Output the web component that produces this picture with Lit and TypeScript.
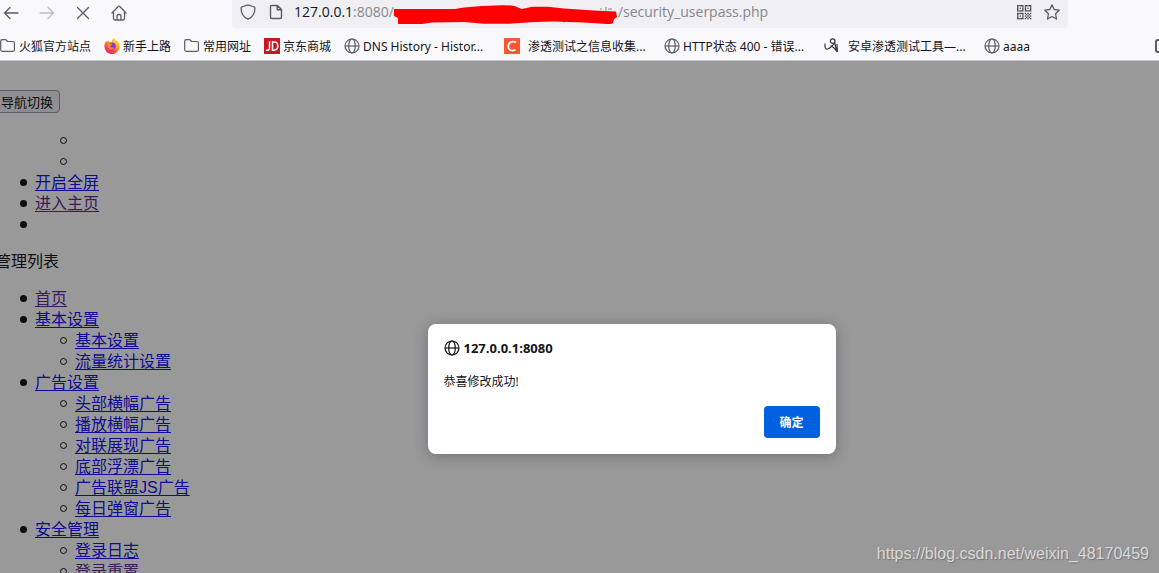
import { LitElement, html, css, svg, nothing } from "lit";
import { customElement } from "lit/decorators.js";

const globe = html`<svg class="icon" viewBox="0 0 16 16" fill="none" stroke="currentColor" stroke-width="1.2" aria-hidden="true">
  <circle cx="8" cy="8" r="7"></circle><ellipse cx="8" cy="8" rx="3.3" ry="7"></ellipse><path d="M1 8H15"></path></svg>`;

const folder = html`<svg class="icon" viewBox="0 0 16 16" fill="none" stroke="currentColor" stroke-width="1.2" stroke-linejoin="round" aria-hidden="true">
  <path d="M.7 3.2q0-1.5 1.5-1.5h3.3q.7 0 1.2.6l1 1.2h5.200q1.500 0 1.500 1.500v6.800q0 1.500-1.500 1.500H2.200q-1.500 0-1.500-1.500z"></path></svg>`;

const firefox = html`<svg class="icon" viewBox="0 0 16 16" aria-hidden="true">
  <defs><linearGradient id="flame" x1=".85" y1=".1" x2=".25" y2="1">
    <stop offset="0" stop-color="#ffe23a"></stop><stop offset=".4" stop-color="#ff9a1f"></stop>
    <stop offset=".72" stop-color="#ff3f4a"></stop><stop offset="1" stop-color="#e5157f"></stop></linearGradient></defs>
  <path fill="url(#flame)" d="M10.200 0c.3 1.500 1.500 2.300 2.400 3.200.9-.2.900-.5.900-.5 1.300 1.500 2.200 3.500 2.100 5.700A7.600 7.600 0 0 1 .4 8.600C.3 6.300 1.200 4.200 2.500 2.800c0 .5.100.9.300 1.200.500-.8 1.200-1.300 1.900-1.500-.1.700.1 1.200.4 1.500 1.300-.2 2 .1 2.700.7C7.600 2.700 8.500 1 10.200 0z"></path>
  <circle cx="8" cy="8.300" r="3.700" fill="#8434d8"></circle>
  <path fill="#ff8b20" d="M3.200 5.300c1.300-.6 2.500-.4 3.600.4l1.700.5c-.1.900-.8 1-1.700 1.200-.7.700-.5 1.700.5 2.200 1 .4 1.700-.2 2.600 0 .7.200.5.800 0 1.200-2.200 1.500-5.200.7-6.200-1.400z"></path></svg>`;

const jd = html`<svg class="icon" viewBox="0 0 16 16" fill="none" stroke="#fff" stroke-width="1.500" aria-hidden="true">
  <path fill="#c81623" stroke="none" d="M0 0h16v16H0z"></path>
  <path d="M5.500 3.300v7q0 2-2 2H2M8.500 12.300V4h2q3.300 0 3.300 4t-4 4.200z"></path></svg>`;

const csdn = html`<svg class="icon" viewBox="0 0 16 16" fill="none" aria-hidden="true">
  <path fill="#fc5531" d="M0 0h16v16H0z"></path>
  <path stroke="#fff" stroke-width="1.800" d="M12 4.600C9.500 3 4.800 3.300 4.300 8.200c-.3 4.500 4 5.100 7.300 3.500"></path></svg>`;

const sketch = html`<svg class="icon" viewBox="0 0 16 16" fill="none" stroke="#333" stroke-width="1.200" aria-hidden="true">
  <path d="M1 5.500c-.2 4 .2 5.700 2 5.700 2.500-.2 4.500-2.500 7-5.200M11 3.200a2.300 2.300 0 1 1-4.600-.2 2.300 2.300 0 0 1 4.600.2zM10.800 4c.2 3 .8 6 2.400 9.300M6.500 7.800c2.500.5 4.600 2.800 6.700 6M13 6l.4 8"></path></svg>`;

type Bookmark = { icon: unknown; title: string; wide?: boolean };
const bookmarks: Bookmark[] = [
  { icon: folder, title: "火狐官方站点" },
  { icon: firefox, title: "新手上路" },
  { icon: folder, title: "常用网址" },
  { icon: jd, title: "京东商城" },
  { icon: globe, title: "DNS History - Histor..." },
  { icon: csdn, title: "渗透测试之信息收集...", wide: true },
  { icon: globe, title: "HTTP状态 400 - 错误..." },
  { icon: sketch, title: "安卓渗透测试工具—...", wide: true },
  { icon: globe, title: "aaaa" },
];

type Entry = { label: string; visited?: boolean; children?: Entry[] };
const menu: Entry[] = [
  { label: "首页", visited: true },
  { label: "基本设置", children: [{ label: "基本设置" }, { label: "流量统计设置" }] },
  {
    label: "广告设置",
    children: [
      { label: "头部横幅广告" },
      { label: "播放横幅广告" },
      { label: "对联展现广告" },
      { label: "底部浮漂广告" },
      { label: "广告联盟JS广告" },
      { label: "每日弹窗广告" },
    ],
  },
  { label: "安全管理", children: [{ label: "登录日志" }, { label: "登录重置", visited: true }] },
];

const qrCells = [
  "11111011111", "10001010001", "10101010101", "10001010001", "11111011111", "00000000000",
  "11111010101", "10001001010", "10101010101", "10001001010", "11111010101",
];

@customElement("browser-chrome")
class BrowserChrome extends LitElement {
  static styles = css`
    :host { display: block; background: #f9f9fb; color: #15141a; border-bottom: 1px solid #cbcbce; }
    button { border: 0; padding: 0; background: none; color: #5b5b66; display: block; }
    .icon { width: 16px; height: 16px; display: block; flex: none; }
    .toolbar { display: flex; align-items: center; height: 32px; padding-left: 3px; }
    .nav { display: flex; gap: 20px; padding-bottom: 7px; }
    .nav button:disabled { color: #bdbdc3; }
    .url { flex: 1; display: flex; align-items: center; align-self: flex-start; height: 24px; margin: 0 91px 0 105px;
      padding: 0 8px 4px; background: #f0f0f4; border-radius: 0 0 4px 4px; }
    .lead { display: flex; gap: 12px; margin-right: 10px; }
    .address { display: flex; flex: 1; align-items: center; font: 14px/24px "Open Sans", "Noto Sans", sans-serif; color: #85858c; white-space: nowrap; }
    .address b { font-weight: 400; color: #15141a; }
    .scribble { width: 224px; height: 24px; flex: none; display: block; }
    .trail { display: flex; gap: 12px; }
    .bookmarks { display: grid; grid-template-columns: 104px repeat(3, 80px) repeat(4, 160px) 1fr auto; align-items: center; height: 28px; overflow: hidden; }
    .bookmarks a { display: flex; align-items: center; gap: 3px; color: #15141a; text-decoration: none; white-space: nowrap;
      font: 12px/20px "Noto Sans", "Noto Sans CJK SC", sans-serif; }
    .bookmarks a.wide { gap: 8px; }
    .bookmarks span { padding-top: 2px; }
    .bookmarks .icon { color: #5b5b66; }
    .more { width: 4px; height: 14px; border: 2px solid #5b5b66; border-right: 0; border-radius: 3px 0 0 3px; box-sizing: border-box; }
  `;
  render() {
    return html`
      <div class="toolbar">
        <div class="nav">
          <button aria-label="后退"><svg class="icon" viewBox="0 0 16 16" fill="none" stroke="currentColor" stroke-width="1.300" stroke-linecap="round"><path d="M15 8H1.500M7 2.500 1.500 8 7 13.500"></path></svg></button>
          <button aria-label="前进" disabled><svg class="icon" viewBox="0 0 16 16" fill="none" stroke="currentColor" stroke-width="1.300" stroke-linecap="round"><path d="M1 8h13.500M9 2.500 14.500 8 9 13.500"></path></svg></button>
          <button aria-label="停止"><svg class="icon" viewBox="0 0 16 16" fill="none" stroke="currentColor" stroke-width="1.300" stroke-linecap="round"><path d="m2.500 2.500 11 11M13.500 2.500l-11 11"></path></svg></button>
          <button aria-label="主页"><svg class="icon" viewBox="0 0 16 16" fill="none" stroke="currentColor" stroke-width="1.300" stroke-linejoin="round" stroke-linecap="round"><path d="M1 8 7.200 1.500q.8-.8 1.600 0L15 8M2.500 7v6.500q0 1.500 1.500 1.500h8q1.500 0 1.500-1.500V7M6 15v-4q0-1.500 1.500-1.500h1q1.500 0 1.500 1.500v4"></path></svg></button>
        </div>
        <div class="url">
          <div class="lead">
            <svg class="icon" viewBox="0 0 16 16" fill="none" stroke="#5b5b66" stroke-width="1.300" stroke-linejoin="round"><path d="M8 .8 14.400 3q.5.200.5.800C14.900 9 12.500 13.500 8 15.200 3.500 13.500 1.100 9 1.100 3.800q0-.6.5-.8z"></path></svg>
            <svg class="icon" viewBox="0 0 16 16" fill="none" stroke="#5b5b66" stroke-width="1.400" stroke-linejoin="round"><path d="M3.500 1.500h6L13.500 5.500v7.500q0 1.500-1.500 1.500H4q-1.500 0-1.500-1.500V2.500q0-1 1-1zM9.200 1.500v4.200h4.300z"></path></svg>
          </div>
          <div class="address" role="textbox" aria-label="地址">
            <b>127.0.0.1</b>:8080/<svg class="scribble" viewBox="0 0 224 24" aria-hidden="true">
              <path stroke="#85858c" stroke-width="1" fill="none" d="M207 8v2M212 7v4M214 9h4M168 21q2 2 4 0"></path>
              <path fill="red" d="M0 9H61Q65 8 70 7.500L88 6 108 5.200Q121 5 124 7.500L128 9 138 6.800H154L170 8.500 200 10.500 222 11.500 223 17 220 19 219 23Q216 24.500 213 24L190 22.500 160 21.500 140 22 115 23.800H90L70 22 55 22.200 38 22.500 27 24.200H4V18L0 16z"></path>
            </svg>/security_userpass.php
          </div>
          <div class="trail">
            <button aria-label="二维码"><svg class="icon" viewBox="0 0 16 16" fill="#3f3f48" aria-hidden="true">${qrCells.map((row, y) =>
              [...row].map((c, x) => (c === "1" ? svg`<rect x=${1 + x * 1.3} y=${1 + y * 1.3} width="1.300" height="1.300"></rect>` : nothing)))}</svg></button>
            <button aria-label="收藏"><svg class="icon" viewBox="0 0 16 16" fill="none" stroke="#5b5b66" stroke-width="1.300" stroke-linejoin="round"><path d="m8 .9 2.200 4.600 5 .7-3.600 3.600.9 5.200L8 12.500 3.500 15l.9-5.200L.8 6.200l5-.7z"></path></svg></button>
          </div>
        </div>
      </div>
      <nav class="bookmarks">
        ${bookmarks.map((b) => html`<a href="#" class=${b.wide ? "wide" : ""}>${b.icon}<span>${b.title}</span></a>`)}
        <button class="more" aria-label="其他书签"></button>
      </nav>`;
  }
}

@customElement("app-root")
class AppRoot extends LitElement {
  static styles = css`
    :host { display: flex; flex-direction: column; height: 100vh; overflow: hidden; }
    .page { position: relative; flex: 1; min-height: 0; overflow: hidden; background: #99999a; color: #0e0e10;
      font: 16px/21px "Liberation Sans", "Noto Sans CJK SC", sans-serif; }
    .content { margin-left: -5px; padding-top: 29px; }
    .toggle { display: block; height: 23px; padding: 0 6px 0 5px; margin: 0 0 17px; border: 1px solid #5c5b68; border-radius: 4px;
      background: #8f8f93; color: #0e0e10; font: 13px/20px "Noto Sans CJK SC", sans-serif; }
    ul { list-style: none; margin: 16px 0; padding-left: 40px; }
    ul ul { margin: 0; }
    li { min-height: 21px; }
    li::before { content: ""; display: inline-block; box-sizing: border-box; width: 7px; height: 7px; margin: 0 8px 2px -15px;
      border-radius: 50%; background: #0e0e10; }
    ul ul li::before { background: none; border: 1px solid #0e0e10; }
    p { margin: 16px 0; }
    .content a { color: #0d0c92; text-underline-offset: 2px; }
    .content a.visited { color: #3b1a5c; }
    .alert { position: absolute; top: 263px; left: calc(50% - 152px); margin: 0; box-sizing: border-box; width: 408px; padding: 16px;
      border: 0; border-radius: 8px; background: #fff; color: #15141a; box-shadow: 0 2px 14px rgba(58, 57, 68, 0.4);
      font: 12px/20px "Open Sans", "Noto Sans CJK SC", sans-serif; }
    .origin { display: flex; align-items: center; gap: 4px; margin: 0 0 16px; font-size: 13px; line-height: 16px; font-weight: 700; }
    .icon { width: 16px; height: 16px; flex: none; }
    .message { margin: 0 0 14px; }
    .actions { display: flex; justify-content: flex-end; }
    .ok { min-width: 56px; height: 32px; padding: 0 15px; border: 0; border-radius: 4px; background: #0061e0; color: #fff;
      font: 700 12px/20px "Noto Sans CJK SC", sans-serif; }
    .watermark { position: absolute; right: 10px; bottom: 8px; color: #d8d8d9; text-shadow: 1px 1px 1px rgba(80, 80, 80, 0.5);
      font: 16px/22px "Liberation Sans", sans-serif; }
  `;
  private entries(items: Entry[]): unknown {
    return html`<ul>${items.map((e) => html`<li><a href="#" class=${e.visited ? "visited" : ""}>${e.label}</a>${e.children ? this.entries(e.children) : nothing}</li>`)}</ul>`;
  }
  render() {
    return html`
      <browser-chrome></browser-chrome>
      <main class="page">
        <div class="content">
          <button class="toggle">导航切换</button>
          <ul>
            <ul><li></li><li></li></ul>
            <li><a href="#">开启全屏</a></li>
            <li><a href="#" class="visited">进入主页</a></li>
            <li></li>
          </ul>
          <p>管理列表</p>
          ${this.entries(menu)}
        </div>
        <dialog class="alert" open aria-labelledby="origin">
          <h1 class="origin" id="origin">${globe}127.0.0.1:8080</h1>
          <p class="message">恭喜修改成功!</p>
          <div class="actions"><button class="ok">确定</button></div>
        </dialog>
        <div class="watermark">https://blog.csdn.net/weixin_48170459</div>
      </main>`;
  }
}
